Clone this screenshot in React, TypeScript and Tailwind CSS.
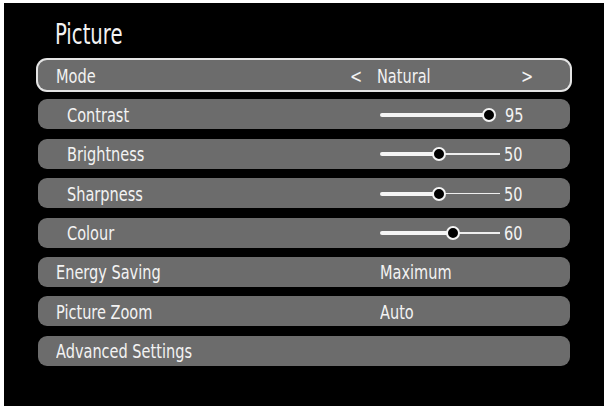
import React from 'react';

const font = { fontFamily: '"Liberation Sans Narrow", "DejaVu Sans Condensed", "Liberation Sans", sans-serif' };

type Item =
    | { kind: 'mode'; label: string; value: string }
    | { kind: 'slider'; label: string; value: number; knob: number; tail: boolean }
    | { kind: 'text'; label: string; value?: string };

const items: Item[] = [
    { kind: 'mode', label: 'Mode', value: 'Natural' },
    { kind: 'slider', label: 'Contrast', value: 95, knob: 109, tail: false },
    { kind: 'slider', label: 'Brightness', value: 50, knob: 59, tail: true },
    { kind: 'slider', label: 'Sharpness', value: 50, knob: 59, tail: true },
    { kind: 'slider', label: 'Colour', value: 60, knob: 73, tail: true },
    { kind: 'text', label: 'Energy Saving', value: 'Maximum' },
    { kind: 'text', label: 'Picture Zoom', value: 'Auto' },
    { kind: 'text', label: 'Advanced Settings' },
];

// the menu font is a narrow one, squeeze DejaVu Condensed a bit
function Txt({ children }: { children: React.ReactNode }) {
    return <span className="inline-block origin-left scale-x-[0.85] whitespace-nowrap">{children}</span>;
}

function Slider({ value, knob, tail }: { value: number; knob: number; tail: boolean }) {
    return (
        <div className="flex items-center">
            <div className="relative h-[16px] w-[120px]">
                {/* filled part */}
                <div
                    className="absolute left-0 top-[6px] h-[4px] rounded-l-full bg-[#f4f4f4]"
                    style={{ width: knob }}
                />
                {tail && (
                    <div
                        className="absolute right-0 top-[7px] h-[1.5px] bg-[#eeeeee]"
                        style={{ left: knob }}
                    />
                )}
                <div
                    className="absolute top-[1px] h-[14px] w-[14px] rounded-full border-2 border-[#f4f4f4] bg-black"
                    style={{ left: knob - 7 }}
                />
            </div>
            <span className={tail ? 'ml-[4px]' : 'ml-[5px]'}>
                <Txt>{value}</Txt>
            </span>
        </div>
    );
}

function Row({ item }: { item: Item }) {
    const sub = item.kind === 'slider';
    return (
        <div
            className={`flex h-[30px] items-center rounded-[9px] bg-[#6c6c6c] pt-[1px] text-[19px] leading-[30px] text-[#f3f3f3] ${
                item.kind === 'mode' ? 'ring-2 ring-[#e4e4e4]' : ''
            }`}
        >
            {item.kind === 'mode' ? (
                <>
                    <span className="w-[312px] pl-[18px]"><Txt>{item.label}</Txt></span>
                    <span className="w-[27px]"><Txt>&lt;</Txt></span>
                    <span className="flex-1"><Txt>{item.value}</Txt></span>
                    <span className="mr-[35px]"><Txt>&gt;</Txt></span>
                </>
            ) : (
                <>
                    <span className={`w-[342px] ${sub ? 'pl-[29px]' : 'pl-[18px]'}`}>
                        <Txt>{item.label}</Txt>
                    </span>
                    {item.kind === 'slider' ? (
                        <Slider value={item.value} knob={item.knob} tail={item.tail} />
                    ) : (
                        item.value && <Txt>{item.value}</Txt>
                    )}
                </>
            )}
        </div>
    );
}

export default function App() {
    return (
        <div className="h-[409px] w-[606px] bg-white pb-[3px] pl-[4px] pr-[2px] pt-[3px]" style={font}>
            <div className="h-full w-full bg-black pt-[18px]">
                <h1 className="pl-[51px] text-[28px] leading-[28px] text-[#f3f3f3]">
                    <span className="inline-block origin-left scale-x-[0.78]">Picture</span>
                </h1>
                <div className="ml-[34px] mt-[11px] flex w-[532px] flex-col gap-[9.4px]">
                    {items.map((item) => (
                        <Row key={item.label} item={item} />
                    ))}
                </div>
            </div>
        </div>
    );
}
